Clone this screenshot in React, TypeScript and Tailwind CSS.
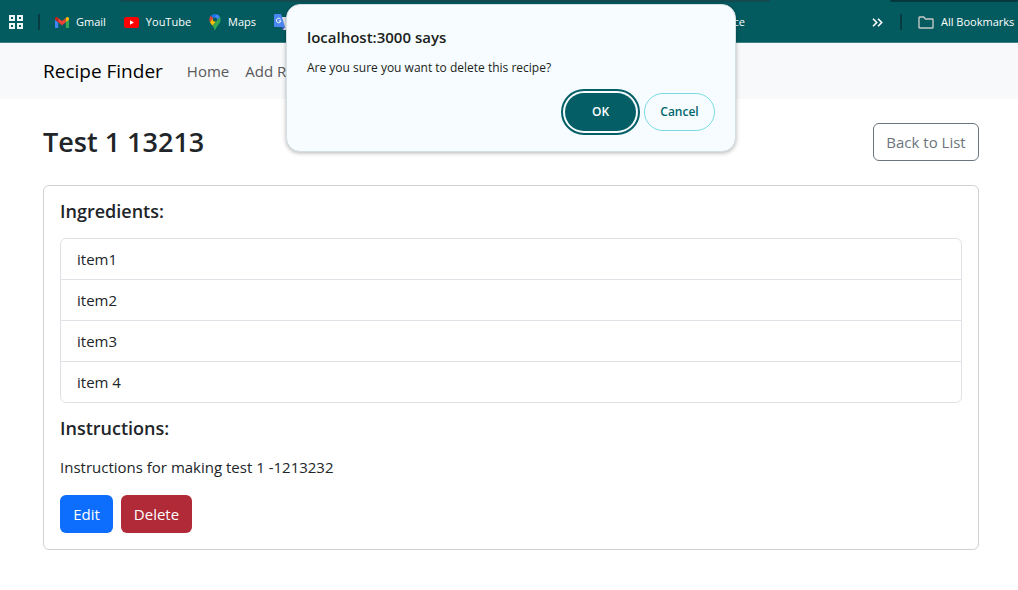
import type { ReactNode } from "react";

function AppsIcon() {
  return (
    <svg width="14" height="14" viewBox="0 0 14 14" fill="none" stroke="#eef5f5" strokeWidth="2" aria-hidden="true">
      <path d="M1 1h4v4H1zM9 1h4v4H9zM1 9h4v4H1zM9 9h4v4H9z" />
    </svg>
  );
}

function GmailIcon() {
  return (
    <svg width="14" height="11" viewBox="52 42 88 66" preserveAspectRatio="none" aria-hidden="true">
      <path fill="#4285f4" d="M58 108h14V74L52 59v43c0 3.32 2.69 6 6 6" />
      <path fill="#34a853" d="M120 108h14c3.32 0 6-2.69 6-6V59l-20 15" />
      <path fill="#fbbc04" d="M120 48v26l20-15v-8c0-7.42-8.47-11.65-14.4-7.2" />
      <path fill="#ea4335" d="M72 74V48l24 18 24-18v26L96 92" />
      <path fill="#c5221f" d="M52 51v8l20 15V48l-5.6-4.2c-5.94-4.45-14.4-.22-14.4 7.2" />
    </svg>
  );
}

function YouTubeIcon() {
  return (
    <svg width="15" height="11" viewBox="0 0 15 11" aria-hidden="true">
      <rect width="15" height="11" rx="2.5" fill="#ff0000" />
      <path d="M6 3.2v4.6l4-2.3z" fill="#fff" />
    </svg>
  );
}

function MapsIcon() {
  return (
    <svg width="12" height="16" viewBox="0 0 92.3 132.3" aria-hidden="true">
      <path fill="#1a73e8" d="M60.2 2.2C55.8.8 51 0 46.1 0 32 0 19.3 6.4 10.8 16.5l21.8 18.3z" />
      <path fill="#ea4335" d="M10.8 16.5C4.1 24.5 0 34.9 0 46.1c0 8.7 1.7 15.7 4.6 22l28-33.3z" />
      <path fill="#4285f4" d="M46.2 28.5c9.8 0 17.7 7.9 17.7 17.7 0 4.3-1.6 8.3-4.2 11.4 0 0 13.9-16.6 27.5-32.7-5.6-10.8-15.3-19-27-22.7L32.6 34.8c3.3-3.8 8.1-6.3 13.6-6.3" />
      <path fill="#fbbc04" d="M46.2 63.8c-9.8 0-17.7-7.9-17.7-17.7 0-4.3 1.5-8.3 4.1-11.3l-28 33.3c4.8 10.6 12.8 19.2 21 29.9l34.1-40.5c-3.3 3.9-8.1 6.3-13.5 6.3" />
      <path fill="#34a853" d="M59.1 109.2c15.4-24.1 33.3-35 33.3-63 0-7.7-1.9-14.9-5.2-21.3L25.6 98c2.6 3.4 5.3 7.3 7.9 11.3 9.4 14.5 6.8 23.1 12.8 23.1s3.4-8.7 12.8-23.2" />
    </svg>
  );
}

function TranslateIcon() {
  return (
    <svg width="16" height="16" viewBox="0 0 16 16" aria-hidden="true">
      <path d="M6 3h9a1 1 0 0 1 1 1v11a1 1 0 0 1-1 1H9z" fill="#dfe3ea" />
      <path d="M7 13h4l-2 3z" fill="#3a54b8" />
      <path d="M1 0h6l4 13H1a1 1 0 0 1-1-1V1a1 1 0 0 1 1-1z" fill="#4a87f0" />
      <path d="M6.6 5.1A2.3 2.3 0 1 0 7 6.9H4.8" fill="none" stroke="#fff" strokeWidth="1" />
    </svg>
  );
}

function FolderIcon() {
  return (
    <svg width="16" height="13" viewBox="0 0 16 13" fill="none" stroke="#c3c7c5" strokeWidth="1.4" className="shrink-0" aria-hidden="true">
      <path d="M1.5 1h4.3l1.6 2h7.1q.5 0 .5.5v8q0 .5-.5.5h-13q-.5 0-.5-.5v-10q0-.5.5-.5z" />
    </svg>
  );
}

function Bookmark({ icon, label }: { icon: ReactNode; label: string }) {
  return (
    <a href="#" className="flex items-center gap-[7px] text-white">
      {icon}
      <span>{label}</span>
    </a>
  );
}

function BookmarksBar() {
  return (
    <header className="border-b border-[#3d8186] bg-[#035b60] text-[11px] leading-4 font-medium">
      <div className="flex h-0.5">
        <div className="w-[120px]" />
        <div className="flex-1 rounded-b-sm bg-[#124b50]" />
        <div className="w-[120px]" />
        <div className="w-[128px] rounded-b-sm bg-[#04383e]" />
      </div>
      <nav aria-label="Bookmarks" className="flex h-10 items-center overflow-hidden whitespace-nowrap">
        <button type="button" aria-label="Apps" className="ml-[9px]">
          <AppsIcon />
        </button>
        <span className="mr-[15px] ml-[15px] h-4 w-0.5 bg-[#063c41]" />
        <div className="flex items-center gap-[18px]">
          <Bookmark icon={<GmailIcon />} label="Gmail" />
          <Bookmark icon={<YouTubeIcon />} label="YouTube" />
          <Bookmark icon={<MapsIcon />} label="Maps" />
          <a href="#" aria-label="Translate">
            <TranslateIcon />
          </a>
        </div>
        <a href="#" className="mr-[127px] ml-auto text-white">
          ce
        </a>
        <button type="button" aria-label="More bookmarks" className="mr-[17px]">
          <svg width="11" height="9" viewBox="0 0 11 9" fill="none" stroke="#fff" strokeWidth="1.6">
            <path d="M1 .8l3.7 3.7L1 8.2M6 .8l3.7 3.7L6 8.2" />
          </svg>
        </button>
        <span className="mr-4 h-4 w-0.5 bg-[#063c41]" />
        <div className="w-[100px]">
          <Bookmark icon={<FolderIcon />} label="All Bookmarks" />
        </div>
      </nav>
    </header>
  );
}

function ConfirmDialog() {
  return (
    <div className="absolute inset-x-0 top-1 flex justify-center pl-1">
      <div
        role="alertdialog"
        aria-labelledby="dialog-title"
        aria-describedby="dialog-message"
        className="w-[450px] rounded-[14px] border border-[#d3dfe1] bg-[#f6fcff] px-5 pt-[22px] pb-5 shadow-[0_1px_4px_rgba(0,0,0,0.3)]"
      >
        <h2 id="dialog-title" className="text-[15px] leading-5 font-semibold text-[#1b1f20]">
          localhost:3000 says
        </h2>
        <p id="dialog-message" className="mt-[11px] text-[12px] leading-5 text-[#1b1f20]">
          Are you sure you want to delete this recipe?
        </p>
        <div className="mt-[15px] flex justify-end gap-2 text-[12px] font-semibold">
          <button
            type="button"
            className="h-[38px] w-[71px] rounded-full bg-[#035e66] text-white outline-2 outline-offset-2 outline-[#035e66]"
          >
            OK
          </button>
          <button type="button" className="h-[38px] w-[71px] rounded-full border border-[#7adbe2] text-[#03666e]">
            Cancel
          </button>
        </div>
      </div>
    </div>
  );
}

const ingredients = ["item1", "item2", "item3", "item 4"];

export default function App() {
  return (
    <div className="relative min-h-screen bg-white font-['Open_Sans','Noto_Sans',sans-serif] text-[15px] leading-6 text-[#212529]">
      <BookmarksBar />
      <nav className="flex h-14 items-center bg-[#f8f9fa] pr-[39px] pl-[43px]">
        <a href="#" className="mr-6 text-[19px] text-black">
          Recipe Finder
        </a>
        <div className="flex gap-4 text-[#595a5b]">
          <a href="#">Home</a>
          <a href="#">Add R</a>
        </div>
      </nav>
      <main className="pt-6 pr-[39px] pb-10 pl-[43px]">
        <div className="flex items-center justify-between">
          <h1 className="text-[27px] leading-[38px] font-semibold">Test 1 13213</h1>
          <button type="button" className="h-[38px] w-[106px] rounded-md border border-[#6c757d] text-[#6c757d]">
            Back to List
          </button>
        </div>
        <section className="mt-6 rounded-md border border-[#d0d1d2] px-4 pt-[13px] pb-4">
          <h2 className="text-[18px] font-semibold">Ingredients:</h2>
          <ul className="mt-[15px] divide-y divide-[#dee2e6] rounded-md border border-[#dee2e6]">
            {ingredients.map((item) => (
              <li key={item} className="px-4 py-2">
                {item}
              </li>
            ))}
          </ul>
          <h2 className="mt-[13px] text-[18px] font-semibold">Instructions:</h2>
          <p className="mt-[15px]">Instructions for making test 1 -1213232</p>
          <div className="mt-4 flex gap-2 text-white">
            <button type="button" className="h-[38px] w-[53px] rounded-md bg-[#0d6efd]">
              Edit
            </button>
            <button type="button" className="h-[38px] w-[71px] rounded-md bg-[#b02a37]">
              Delete
            </button>
          </div>
        </section>
      </main>
      <ConfirmDialog />
    </div>
  );
}
